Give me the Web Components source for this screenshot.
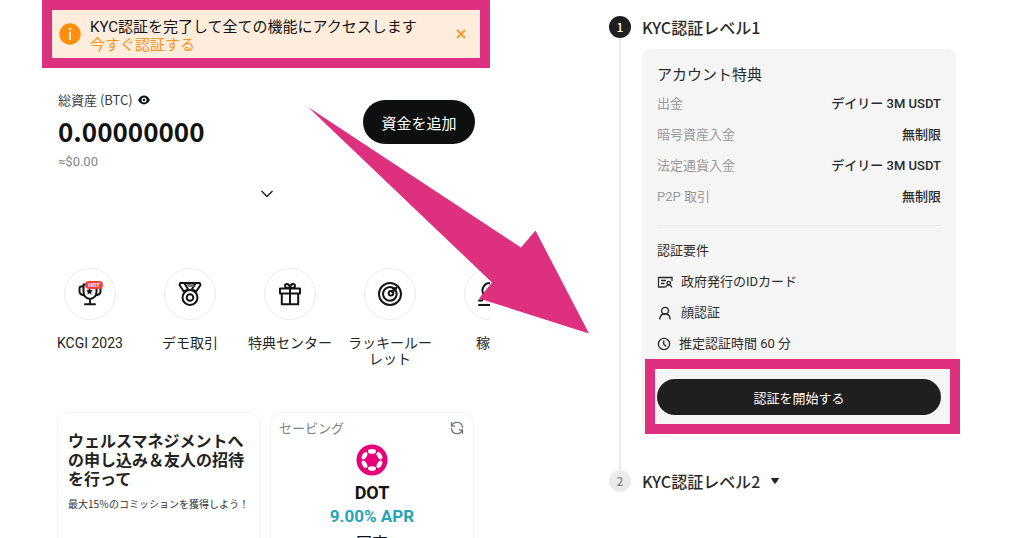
<!DOCTYPE html>
<html lang="ja">
<head>
<meta charset="utf-8">
<meta name="viewport" content="width=device-width, initial-scale=1">
<title>KYC認証</title>
<style>
  :root {
    --accent: #dd317f;
    --ink: #121214;
    --muted: #81858c;
  }
  body {
    margin: 0;
    background: #fff;
    color: var(--ink);
    font-family: "Noto Sans CJK JP", sans-serif;
  }
</style>
</head>
<body>
<kyc-guide></kyc-guide>

<script>
const define = (name, html) => {
  const template = document.createElement('template');
  template.innerHTML = html;
  customElements.define(name, class extends HTMLElement {
    constructor() {
      super();
      this.attachShadow({ mode: 'open' }).append(template.content.cloneNode(true));
    }
  });
};

/* Notice bar inside a highlight frame */
define('notice-bar', `
  <style>
    :host { display: flex; align-items: center; gap: 9px; border: 10px solid var(--accent);
      background: #feeddc; padding: 0 7px; font-family: Roboto, "Noto Sans CJK JP", sans-serif; }
    .text { flex: 1; padding: 8px 0 4px; font-size: 15px; line-height: 18px; }
    p { margin: 0; }
    a { color: #ff9416; text-decoration: none; }
    button { width: 24px; height: 24px; padding: 0; border: 0; background: none; display: grid; place-items: center; }
    svg { display: block; flex: none; }
  </style>
  <svg width="22" height="22" viewBox="0 0 22 22" aria-hidden="true">
    <circle cx="11" cy="11" r="10.7" fill="#ff8e0d"/>
    <circle cx="11" cy="6" r="1.3" fill="#feeddc"/>
    <rect x="10" y="8.6" width="2" height="8.4" fill="#feeddc"/>
  </svg>
  <div class="text"><p><slot></slot></p><a href="#verify"><slot name="link"></slot></a></div>
  <button type="button" aria-label="閉じる">
    <svg width="10" height="10" viewBox="0 0 10 10"><path d="M1 1l8 8M9 1l-8 8" stroke="#f99a24" stroke-width="1.8"/></svg>
  </button>
`);

define('asset-summary', `
  <style>
    :host { display: block; padding: 22px 15px 0 16px; }
    .row { display: flex; justify-content: space-between; align-items: flex-start; }
    .totals { display: grid; gap: 5px; }
    .label { display: flex; align-items: center; gap: 5px; font-size: 13px; line-height: 20px; color: #3a3e3d; }
    .amount { font-size: 26px; line-height: 32px; font-weight: 700; color: #111514; }
    .fiat { font-family: Roboto, sans-serif; font-size: 13px; line-height: 20px; color: var(--muted); }
    .add { margin-top: 10px; width: 112px; height: 44px; padding: 0; border: 0; border-radius: 22px;
      background: #0d100f; color: #fff; font: 15px "Noto Sans CJK JP", sans-serif; }
    .more { display: grid; place-items: center; width: 24px; height: 20px; margin: 12px auto 0; padding: 0; border: 0; background: none; }
    svg { display: block; }
  </style>
  <div class="row">
    <div class="totals">
      <div class="label">総資産 (BTC)
        <svg width="12" height="10" viewBox="0 0 12 10" aria-hidden="true">
          <path d="M0 5Q2.5 .6 6 .6T12 5Q9.500 9.400 6 9.400T0 5Z" fill="#111514"/>
          <circle cx="6" cy="5" r="2.500" fill="#fff"/><circle cx="6" cy="5" r="1.300" fill="#111514"/>
        </svg>
      </div>
      <div class="amount">0.00000000</div>
      <div class="fiat">≈$0.00</div>
    </div>
    <button class="add" type="button">資金を追加</button>
  </div>
  <button class="more" type="button" aria-label="もっと見る">
    <svg width="14" height="8" viewBox="0 0 14 8"><path d="M1.500 1L7 6.500L12.500 1" fill="none" stroke="#222" stroke-width="1.500"/></svg>
  </button>
`);

define('quick-action', `
  <style>
    :host { display: block; flex: none; width: 88px; }
    a { display: grid; justify-items: center; gap: 15px; color: #222625; text-decoration: none; text-align: center;
      font-family: Roboto, "Noto Sans CJK JP", sans-serif; font-size: 14px; line-height: 16px; }
    .disc { display: grid; place-items: center; box-sizing: border-box; width: 52px; height: 52px;
      border: 1px solid #e9eceb; border-radius: 50%; }
  </style>
  <a href="#action"><span class="disc"><slot name="icon"></slot></span><span><slot></slot></span></a>
`);

define('quick-actions', `
  <style>
    :host { display: flex; gap: 12px; margin-top: 64px; padding: 0 0 5px 4px; overflow: hidden; }
    svg { display: block; fill: none; stroke: #151515; stroke-width: 2; stroke-linejoin: round; stroke-linecap: round; }
  </style>
  <quick-action>
    <svg slot="icon" width="26" height="26" viewBox="0 0 26 26">
      <path d="M6.500 3.500h13v7q0 6.500-6.500 7.500q-6.500-1-6.500-7.500zM13 18v5M8 23.300h10M6.500 5.500H4.200q-1.700 0-1.700 2v3q0 3 5 4M19.500 5.500h2.300q1.700 0 1.700 2v3q0 3-5 4"/>
      <path d="M12.500 7l1.100 2.100 2.300.3-1.700 1.700.4 2.300-2.100-1.100-2.100 1.100.4-2.300-1.700-1.700 2.300-.3z" fill="#151515" stroke="none"/>
      <rect x="8" y="0" width="18" height="8" rx="4" fill="#f6433f" stroke="none"/>
      <text x="17" y="6" text-anchor="middle" fill="#fff" stroke="none" font-family="Roboto, sans-serif" font-size="6" font-weight="900" font-style="italic">HOT</text>
    </svg>KCGI 2023
  </quick-action>
  <quick-action>
    <svg slot="icon" width="26" height="26" viewBox="0 0 26 26">
      <path d="M8 2H3.200L2.500 4l4.300 6.500L10 9M18 2h4.800l.7 2-4.300 6.500L16 9M8 2h10M7.500 2.500L11 8M18.500 2.500L15 8"/>
      <path d="M9.500 3h7v3h-5z" fill="#777" stroke="none"/>
      <circle cx="13" cy="16.500" r="7.500"/><circle cx="13" cy="16.500" r="3.300"/>
    </svg>デモ取引
  </quick-action>
  <quick-action>
    <svg slot="icon" width="26" height="26" viewBox="0 0 26 26">
      <path d="M3 7.500h20v5H3zM4.800 12.500h16.400v10.800H4.800zM13 7.500v15.800M13 7Q8 7.500 8 4.800Q8 2.500 10.500 3Q12.800 4 13 7ZM13 7Q18 7.500 18 4.800Q18 2.500 15.500 3Q13.200 4 13 7Z"/>
    </svg>特典センター
  </quick-action>
  <quick-action>
    <svg slot="icon" width="26" height="26" viewBox="0 0 26 26">
      <circle cx="13" cy="13" r="11"/>
      <path d="M16.500 7.200A6.800 6.800 0 1 0 19.300 10.800M19.500 6.500L15 11M15.800 7.500L19 7L18.500 10.200"/>
      <circle cx="14" cy="12.200" r="2.300"/>
    </svg>ラッキールーレット
  </quick-action>
  <quick-action>
    <svg slot="icon" width="26" height="26" viewBox="0 0 26 26">
      <path d="M2 24h22M2 19.500h3l3-4Q5 12 5.500 8.500Q7 2 13 2T20.500 8.500Q21 12 18 15.500l3 4h3"/>
    </svg>稼ぐ
  </quick-action>
`);

define('promo-card', `
  <style>
    :host { display: block; border: 1px solid #f3f4f4; border-radius: 12px; padding: 18px 10px; }
    h2 { margin: 0; font-size: 16px; line-height: 19px; font-weight: 700; color: #222; }
    p { margin: 9px 0 0; font-size: 10px; line-height: 14px; color: #333; white-space: nowrap; }
  </style>
  <h2><slot></slot></h2><p><slot name="note"></slot></p>
`);

define('saving-card', `
  <style>
    :host { display: block; border: 1px solid #f3f4f4; border-radius: 12px; padding: 7px 8px; text-align: center; }
    header { display: flex; justify-content: space-between; align-items: center; font-size: 13px; line-height: 16px; color: #7d8482; }
    button { padding: 0; border: 0; background: none; }
    svg { display: block; }
    .coin { margin: 8px auto 5px; }
    .name, .rate { font-family: Roboto, sans-serif; font-weight: 700; }
    .name { font-size: 18px; line-height: 24px; color: #151515; }
    .rate { font-size: 17px; line-height: 22px; color: #27a5b8; }
    .term { margin-top: 3px; font-size: 16px; line-height: 24px; }
  </style>
  <header>セービング
    <button type="button" aria-label="更新">
      <svg width="16" height="16" viewBox="0 0 16 16" fill="none" stroke="#707775" stroke-width="1.300">
        <path d="M2.800 6Q4 2.300 8 2.300Q13.300 2.300 13.500 8M13.200 10Q12 13.700 8 13.700Q2.700 13.700 2.500 8M2.500 2v4.200h3.700M13.500 14V9.800H9.800"/>
      </svg>
    </button>
  </header>
  <svg class="coin" width="32" height="32" viewBox="0 0 32 32" aria-hidden="true">
    <circle cx="16" cy="16" r="15.500" fill="#e6007a"/>
    <g fill="#fff">
      <ellipse cx="16" cy="7.400" rx="4" ry="2.300"/>
      <ellipse cx="16" cy="24.600" rx="4" ry="2.300"/>
      <ellipse cx="16" cy="7.400" rx="4" ry="2.300" transform="rotate(60 16 16)"/>
      <ellipse cx="16" cy="7.400" rx="4" ry="2.300" transform="rotate(120 16 16)"/>
      <ellipse cx="16" cy="7.400" rx="4" ry="2.300" transform="rotate(240 16 16)"/>
      <ellipse cx="16" cy="7.400" rx="4" ry="2.300" transform="rotate(300 16 16)"/>
    </g>
  </svg>
  <div class="name">DOT</div>
  <div class="rate">9.00% APR</div>
  <div class="term">固定</div>
`);

define('home-panel', `
  <style>
    :host { display: block; min-width: 0; }
    .cards { display: grid; grid-template-columns: 1fr 1fr; gap: 9px; margin: 40px 16px 0 15px; }
  </style>
  <notice-bar>KYC認証を完了して全ての機能にアクセスします<span slot="link">今すぐ認証する</span></notice-bar>
  <asset-summary></asset-summary>
  <quick-actions></quick-actions>
  <div class="cards">
    <promo-card>ウェルスマネジメントへの申し込み＆友人の招待を行って<span slot="note">最大15％のコミッションを獲得しよう！</span></promo-card>
    <saving-card></saving-card>
  </div>
`);

/* One step of the vertical stepper: number rail on the left, content on the right */
define('kyc-step', `
  <style>
    :host { display: grid; grid-template-columns: 22px 1fr; gap: 11px; }
    .rail { display: flex; flex-direction: column; align-items: center; }
    .num { width: 22px; height: 22px; border-radius: 50%; background: #ebebeb; color: #8c8c8c;
      font-size: 12px; line-height: 22px; font-weight: 500; text-align: center; }
    .line { display: none; flex: 1; width: 2px; background: #ebebeb; }
    :host([active]) .num { background: #1f1f1f; color: #fff; }
    :host([active]) .line { display: block; }
    :host([active]) .body { padding-bottom: 36px; }
    h2 { display: flex; align-items: center; gap: 11px; margin: 0; font-size: 16px; line-height: 22px; font-weight: 500; color: #2a2a2a; }
  </style>
  <div class="rail"><span class="num"><slot name="num"></slot></span><span class="line"></span></div>
  <div class="body"><h2><slot name="title"></slot></h2><slot></slot></div>
`);

define('level-card', `
  <style>
    :host { display: block; margin-top: 11px; padding: 15px 15px 19px; border-radius: 8px; background: #f5f5f5;
      font-size: 13px; color: #2a2a2a; font-family: Roboto, "Noto Sans CJK JP", sans-serif; }
    h3, h4, dl, dd, ul { margin: 0; padding: 0; font-weight: 400; }
    h3 { font-size: 15px; line-height: 22px; margin-bottom: 2px; }
    dl div { display: flex; justify-content: space-between; line-height: 31px; }
    dt { color: #999; }
    dd { font-weight: 500; }
    hr { margin: 13px 0 10px; border: 0; height: 1px; background: #ebebeb; }
    h4 { font-size: 13px; line-height: 30px; }
    li { display: flex; align-items: center; gap: 8px; line-height: 31px; }
    li svg { display: block; fill: none; stroke: #2a2a2a; stroke-width: 1.300; }
    .cta { position: relative; margin-top: 20px; }
    .cta button { display: block; width: 100%; height: 36px; padding: 0; border: 0; border-radius: 18px; background: #1f1f1f; color: #fff;
      font: 13px Roboto, "Noto Sans CJK JP", sans-serif; }
    .ring { position: absolute; inset: -20px -19px -19px -12px; border: 10px solid var(--accent); pointer-events: none; }
  </style>
  <h3>アカウント特典</h3>
  <dl>
    <div><dt>出金</dt><dd>デイリー 3M USDT</dd></div>
    <div><dt>暗号資産入金</dt><dd>無制限</dd></div>
    <div><dt>法定通貨入金</dt><dd>デイリー 3M USDT</dd></div>
    <div><dt>P2P 取引</dt><dd>無制限</dd></div>
  </dl>
  <hr>
  <h4>認証要件</h4>
  <ul>
    <li><svg width="16" height="14" viewBox="0 0 16 14"><path d="M8 12H1.500V2.500H15V6M4 5.500h5M4 8.500h3.500M8.800 12.500q0-2.500 2.800-2.700Q14.500 10 14.700 12.500M11.700 9.700a1.700 1.700 0 1 1 .1 0"/></svg>政府発行のIDカード</li>
    <li><svg width="16" height="14" viewBox="0 0 16 14"><circle cx="8" cy="4.800" r="3.400"/><path d="M2.800 13.500Q3 8.800 6.500 8h3Q13 8.800 13.200 13.500"/></svg>顔認証</li>
    <li><svg width="14" height="14" viewBox="0 0 14 14"><circle cx="7" cy="7" r="5.600"/><path d="M6.700 3.500V7l2.500 2.500"/></svg>推定認証時間 60 分</li>
  </ul>
  <div class="cta"><button type="button">認証を開始する</button><span class="ring"></span></div>
`);

define('kyc-levels', `
  <style>
    :host { display: block; padding-top: 16px; }
    svg { display: block; }
  </style>
  <kyc-step active><span slot="num">1</span><span slot="title">KYC認証レベル1</span><level-card></level-card></kyc-step>
  <kyc-step><span slot="num">2</span><span slot="title">KYC認証レベル2</span>
    <svg slot="title" width="8" height="6" viewBox="0 0 8 6" aria-hidden="true"><path d="M.5 .5h7L4 5.500z" fill="#222" stroke="#222" stroke-linejoin="round"/></svg>
  </kyc-step>
`);

/* Arrow that lies over both panels, from the notice to the start button */
define('flow-arrow', `
  <style>
    :host { display: block; position: absolute; left: 308px; top: 107px; pointer-events: none; }
    svg { display: block; }
  </style>
  <svg width="281" height="227" viewBox="0 0 281 227" aria-hidden="true">
    <path d="M0 0L213 140.500L227.500 123.500L281 226.500L171 191.500L184 175.500Z" fill="#dd317f"/>
  </svg>
`);

define('kyc-guide', `
  <style>
    :host { display: grid; grid-template-columns: 448fr 347fr; column-gap: 119px; padding: 0 68px 0 42px; position: relative; align-items: start; }
  </style>
  <home-panel></home-panel>
  <kyc-levels></kyc-levels>
  <flow-arrow></flow-arrow>
`);
</script>
</body>
</html>
